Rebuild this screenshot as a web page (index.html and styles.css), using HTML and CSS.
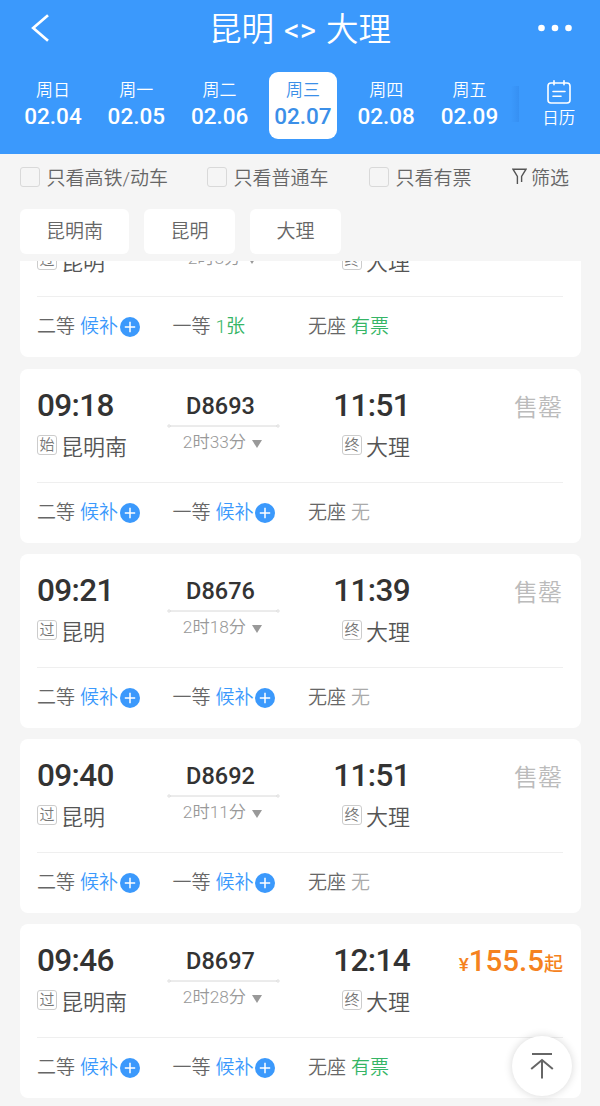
FILE: index.html
```
<!DOCTYPE html>
<html lang="zh-CN">
<head>
  <meta charset="UTF-8" />
  <meta name="viewport" content="width=device-width, initial-scale=1.0" />
  <title>昆明 - 大理</title>
  <link rel="stylesheet" href="styles.css">
</head>
<body>

  <svg width="0" height="0" class="sprite">
    <symbol id="plus" viewBox="0 0 20 20">
      <circle cx="10" cy="10" r="10" fill="#3b99fc" />
      <path d="M10 4.8v10.4M4.8 10h10.4" stroke="#fff" stroke-width="1.5" />
    </symbol>
    <symbol id="track" viewBox="0 0 113 4">
      <path d="M3 2h107" stroke="#d8d8d8" stroke-width="1" />
      <circle cx="2" cy="2" r="1.2" fill="#fff" stroke="#d0d0d0" stroke-width=".7" />
      <circle cx="111" cy="2" r="1.2" fill="#fff" stroke="#d0d0d0" stroke-width=".7" />
    </symbol>
  </svg>

  <header class="header">
    <div class="nav">
      <svg class="back" width="20" height="28" viewBox="0 0 20 28"><path d="M18 1.2L3.2 14 18 26.8" fill="none" stroke="#fff" stroke-width="2.7" /></svg>
      <h1 class="title">昆明 <span>&lt;&gt;</span> 大理</h1>
      <svg class="more" width="34" height="8" viewBox="0 0 34 8" fill="#fff"><circle cx="3.5" cy="4" r="3.3" /><circle cx="17" cy="4" r="3.3" /><circle cx="30.5" cy="4" r="3.3" /></svg>
    </div>
    <div class="dates">
      <div class="day"><span>周日</span><b>02.04</b></div>
      <div class="day"><span>周一</span><b>02.05</b></div>
      <div class="day"><span>周二</span><b>02.06</b></div>
      <div class="day active"><span>周三</span><b>02.07</b></div>
      <div class="day"><span>周四</span><b>02.08</b></div>
      <div class="day"><span>周五</span><b>02.09</b></div>
      <div class="edge"></div>
      <div class="calendar">
        <svg width="24" height="24" viewBox="0 0 24 24" fill="none" stroke="#fff" stroke-width="1.6" stroke-linecap="round">
          <rect x="1" y="3" width="22" height="20" rx="3" />
          <path d="M7 .8v4M17 .8v4M6 11.5h12M6 16.2h8" />
        </svg>
        <span>日历</span>
      </div>
    </div>
  </header>

  <div class="filters">
    <label class="check"><i></i>只看高铁/动车</label>
    <label class="check"><i></i>只看普通车</label>
    <label class="check"><i></i>只看有票</label>
    <div class="filter">
      <svg width="15" height="17" viewBox="0 0 15 17" fill="none" stroke="#555" stroke-width="1.4"><path d="M5.4 16V8.4L1 1.2h13L9.6 8.4V14" /></svg>
      筛选
    </div>
  </div>

  <div class="stations">
    <button class="wide">昆明南</button>
    <button>昆明</button>
    <button>大理</button>
  </div>

  <main class="list">
    <div class="card first">
      <div class="trip">
        <div class="from"><div class="time">09:00</div><div class="place"><i>过</i>昆明</div></div>
        <div class="train"><b>D8690</b><svg width="113" height="4"><use href="#track" /></svg><span>2时8分<em></em></span></div>
        <div class="to"><div class="time">11:08</div><div class="place"><i>终</i>大理</div></div>
        <div class="price"></div>
      </div>
      <div class="seats">
        <div>二等 <span class="wait">候补</span><svg width="20" height="20"><use href="#plus" /></svg></div>
        <div>一等 <span class="left">1张</span></div>
        <div>无座 <span class="left">有票</span></div>
      </div>
    </div>

    <div class="card">
      <div class="trip">
        <div class="from"><div class="time">09:18</div><div class="place"><i>始</i>昆明南</div></div>
        <div class="train"><b>D8693</b><svg width="113" height="4"><use href="#track" /></svg><span>2时33分<em></em></span></div>
        <div class="to"><div class="time">11:51</div><div class="place"><i>终</i>大理</div></div>
        <div class="price sold">售罄</div>
      </div>
      <div class="seats">
        <div>二等 <span class="wait">候补</span><svg width="20" height="20"><use href="#plus" /></svg></div>
        <div>一等 <span class="wait">候补</span><svg width="20" height="20"><use href="#plus" /></svg></div>
        <div>无座 <span class="none">无</span></div>
      </div>
    </div>

    <div class="card">
      <div class="trip">
        <div class="from"><div class="time">09:21</div><div class="place"><i>过</i>昆明</div></div>
        <div class="train"><b>D8676</b><svg width="113" height="4"><use href="#track" /></svg><span>2时18分<em></em></span></div>
        <div class="to"><div class="time">11:39</div><div class="place"><i>终</i>大理</div></div>
        <div class="price sold">售罄</div>
      </div>
      <div class="seats">
        <div>二等 <span class="wait">候补</span><svg width="20" height="20"><use href="#plus" /></svg></div>
        <div>一等 <span class="wait">候补</span><svg width="20" height="20"><use href="#plus" /></svg></div>
        <div>无座 <span class="none">无</span></div>
      </div>
    </div>

    <div class="card">
      <div class="trip">
        <div class="from"><div class="time">09:40</div><div class="place"><i>过</i>昆明</div></div>
        <div class="train"><b>D8692</b><svg width="113" height="4"><use href="#track" /></svg><span>2时11分<em></em></span></div>
        <div class="to"><div class="time">11:51</div><div class="place"><i>终</i>大理</div></div>
        <div class="price sold">售罄</div>
      </div>
      <div class="seats">
        <div>二等 <span class="wait">候补</span><svg width="20" height="20"><use href="#plus" /></svg></div>
        <div>一等 <span class="wait">候补</span><svg width="20" height="20"><use href="#plus" /></svg></div>
        <div>无座 <span class="none">无</span></div>
      </div>
    </div>

    <div class="card">
      <div class="trip">
        <div class="from"><div class="time">09:46</div><div class="place"><i>过</i>昆明南</div></div>
        <div class="train"><b>D8697</b><svg width="113" height="4"><use href="#track" /></svg><span>2时28分<em></em></span></div>
        <div class="to"><div class="time">12:14</div><div class="place"><i>终</i>大理</div></div>
        <div class="price"><small>¥</small>155.5<small>起</small></div>
      </div>
      <div class="seats">
        <div>二等 <span class="wait">候补</span><svg width="20" height="20"><use href="#plus" /></svg></div>
        <div>一等 <span class="wait">候补</span><svg width="20" height="20"><use href="#plus" /></svg></div>
        <div>无座 <span class="left">有票</span></div>
      </div>
    </div>
  </main>

  <button class="to-top">
    <svg width="24" height="28" viewBox="0 0 24 28" fill="none" stroke="#666" stroke-width="2"><path d="M2 2h20M12 26.5V8.5M1.2 17L12 8l10.800 9" /></svg>
  </button>

</body>
</html>
```
FILE: styles.css
```
* { margin: 0; padding: 0; box-sizing: border-box; }
body {
  height: 1106px;
  overflow: hidden;
  display: flex;
  flex-direction: column;
  font-family: Roboto, "Noto Sans CJK SC", sans-serif;
  font-weight: 350;
  background: #f5f5f5;
  color: #666;
}
i, em { font-style: normal; }
button { border: none; font-family: inherit; font-weight: inherit; color: inherit; }
.sprite { position: absolute; }

/* header */
.header {
  height: 154px;
  flex: none;
  background: #3b99fc;
  color: #fff;
}
.nav {
  height: 72px;
  padding: 0 28px 16px 30px;
  display: flex;
  align-items: center;
  justify-content: space-between;
}
.title {
  font-size: 32.500px;
  font-weight: 350;
  line-height: 40px;
  word-spacing: 2px;
  padding-top: 5px;
  margin-left: 12px;
}
.title span { font-size: 31px; font-weight: 400; }
.dates { display: flex; padding-left: 19px; }
.day {
  width: 68px;
  height: 67px;
  margin-right: 15.300px;
  padding-top: 6px;
  border-radius: 9px;
  text-align: center;
}
.day span { display: block; font-size: 17px; line-height: 24px; }
.day b { display: block; font-size: 22.500px; font-weight: 500; line-height: 28px; }
.day.active { background: #fff; color: #3b8fe8; }
.edge {
  width: 8px;
  height: 36px;
  margin: 14px 0 0 -8px;
  background: linear-gradient(to right, #3b99fc, #3690f3);
}
.calendar {
  margin-left: 21px;
  padding-top: 8px;
  width: 38px;
  text-align: center;
}
.calendar svg { display: block; margin: 0 auto; }
.calendar span { display: block; padding-top: 2px; font-size: 16.500px; line-height: 26px; }

/* filters */
.filters {
  height: 55px;
  flex: none;
  display: grid;
  grid-template-columns: 187px 162px 143px 1fr;
  padding: 10px 0 0 20px;
  font-size: 19px;
  line-height: 29px;
}
.check, .filter { display: flex; white-space: nowrap; }
.check i {
  width: 20px;
  height: 20px;
  margin: 3px 6.500px 0 0;
  border: 1.500px solid #d9d9d9;
  border-radius: 3px;
}
.filter svg { margin: 4px 4px 0 0; }
.stations {
  height: 52px;
  flex: none;
  display: flex;
  gap: 15px;
  padding-left: 20px;
}
.stations button {
  width: 91px;
  height: 45px;
  border-radius: 6px;
  background: #fff;
  font-size: 19px;
  line-height: 30px;
}
.stations .wide { width: 109px; }

/* train list */
.list { flex: 1; overflow: hidden; padding: 0 19px 0 20px; }
.card {
  height: 174px;
  margin-bottom: 11px;
  padding: 0 18px 0 17px;
  border-radius: 8px;
  background: #fff;
}
.card.first { margin-top: -78px; margin-bottom: 12px; }
.trip {
  height: 114px;
  display: grid;
  grid-template-columns: 130px 113px 130px 1fr;
  border-bottom: 1px solid #efefef;
}
.time {
  padding-top: 19px;
  font-size: 31.500px;
  font-weight: 500;
  line-height: 36px;
  letter-spacing: -0.650px;
  color: #333;
}
.place {
  display: flex;
  margin-top: 8px;
  font-size: 22px;
  line-height: 32px;
  color: #555;
}
.place i {
  width: 20px;
  height: 20px;
  margin: 3px 4px 0 0;
  border: 1px solid #ccc;
  border-radius: 3px;
  font-size: 15px;
  line-height: 18px;
  text-align: center;
  color: #777;
}
.first .place { margin-top: 9px; }
.to { text-align: right; }
.to .place { justify-content: flex-end; }
.train { text-align: center; padding-top: 22px; }
.train b {
  display: block;
  padding-right: 6px;
  font-size: 23.500px;
  font-weight: 500;
  line-height: 30px;
  color: #333;
}
.train svg { display: block; margin-top: 3px; }
.train span { display: block; padding: 1px 2px 0 0; font-size: 17.300px; line-height: 26px; color: #999; }
.first .train span { padding-top: 3px; }
.train em {
  display: inline-block;
  margin-left: 6px;
  border: 5.500px solid transparent;
  border-top: 8px solid #999;
  border-bottom: 0;
}
.price {
  padding-top: 19px;
  text-align: right;
  font-size: 29.500px;
  font-weight: 500;
  line-height: 36px;
  white-space: nowrap;
  color: #f58220;
}
.price small { font-size: 19px; }
.price.sold { padding: 21px 1px 0 0; font-size: 24px; font-weight: 350; color: #bbb; }
.seats {
  display: grid;
  grid-template-columns: 135.500px 135.500px 1fr;
  padding-top: 15px;
  font-size: 19px;
  line-height: 30px;
}
.seats div { display: flex; gap: 5px; }
.seats svg { margin: 5px 0 0 -3.500px; }
.wait { color: #3b99fc; }
.left { color: #35b566; }
.none { color: #aaa; }

.to-top {
  position: absolute;
  left: 512px;
  top: 1036px;
  width: 60px;
  height: 60px;
  border-radius: 50%;
  background: #fff;
  box-shadow: 0 0 8px rgba(0,0,0,0.16);
}
.to-top svg { display: block; margin: 0 auto; }
```
